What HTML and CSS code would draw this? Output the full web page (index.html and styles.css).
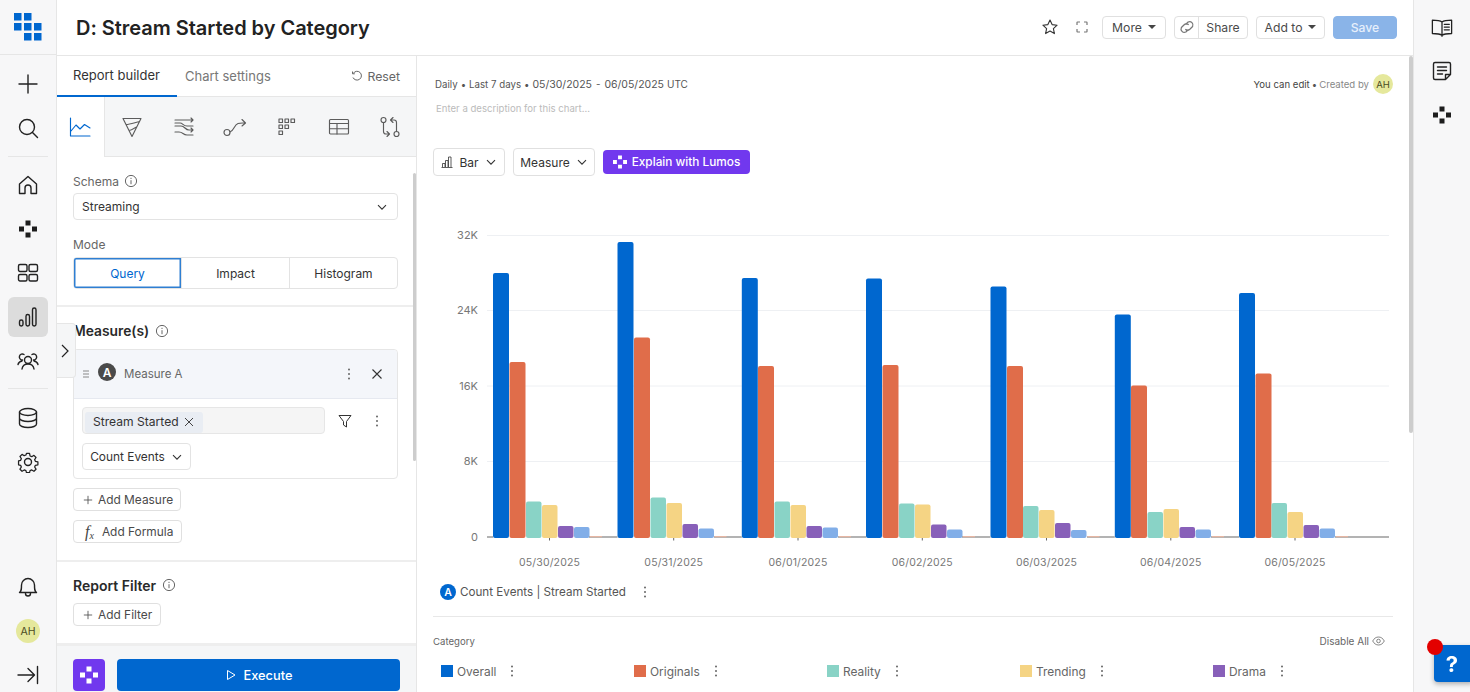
FILE: index.html
```html
<!DOCTYPE html>
<html lang="en">
<head>
<meta charset="utf-8">
<title>D: Stream Started by Category</title>
<link rel="stylesheet" href="styles.css">
</head>
<body>
<svg class="defs" width="0" height="0" aria-hidden="true">
  <symbol id="lumos" viewBox="0 0 18 18"><path d="M6.5 0.5h5v5h-5zM0 6.5h5v5H0zM13 6.5h5v5h-5zM6.5 12.5h5v5h-5z"/></symbol>
  <symbol id="info" viewBox="0 0 14 14"><circle cx="7" cy="7" r="5.6" fill="none" stroke="currentColor"/><path d="M7 6.2v4M7 3.8v1.2" stroke="currentColor" fill="none"/></symbol>
  <symbol id="chev" viewBox="0 0 12 12"><path d="M2 4.2l4 4 4-4" fill="none" stroke="currentColor" stroke-width="1.1"/></symbol>
  <symbol id="dots" viewBox="0 0 4 14"><circle cx="2" cy="2.5" r="1" fill="currentColor"/><circle cx="2" cy="7" r="1" fill="currentColor"/><circle cx="2" cy="11.5" r="1" fill="currentColor"/></symbol>
  <symbol id="plus" viewBox="0 0 12 12"><path d="M6 1v10M1 6h10" fill="none" stroke="currentColor"/></symbol>
</svg>
<div class="app">
  <nav class="rail">
    <div class="logo-cell">
      <svg width="28" height="28" viewBox="14 13 28 28"><path class="logo" d="M14 13h7.500v7.500H14zM24 13h7.500v7.500H24zM14 23h7.500v7.500H14zM24 23h7.500v7.500H24zM34 23h7.500v7.500H34zM24 33h7.500v7.500H24zM34 33h7.500v7.500H34z"/></svg>
    </div>
    <div class="rail-top">
      <a class="rail-item"><svg class="ico" viewBox="0 0 22 22"><path d="M11 2v18M2 11h18"/></svg></a>
      <a class="rail-item"><svg class="ico" viewBox="0 0 22 22"><circle cx="10" cy="10" r="7.500"/><path d="M15.500 15.500l5 5"/></svg></a>
    </div>
    <div class="rail-div first"></div>
    <a class="rail-item"><svg class="ico" viewBox="0 0 22 22"><path d="M2.500 10L11 2.500 19.500 10v9.500h-5.500v-5.500a3 3 0 0 0-6 0v5.500H2.500z"/></svg></a>
    <a class="rail-item"><svg class="lumos-ico" width="18" height="18"><use href="#lumos"/></svg></a>
    <a class="rail-item"><svg class="ico" viewBox="0 0 22 22"><rect x="1.500" y="2.500" width="8.500" height="7" rx="1.500"/><rect x="12" y="2.500" width="8.500" height="7" rx="1.500"/><rect x="1.500" y="12.500" width="8.500" height="6.500" rx="1.500"/><rect x="12" y="12.500" width="8.500" height="6.500" rx="1.500"/></svg></a>
    <a class="rail-item active"><span class="active-bg"><svg class="ico" viewBox="0 0 22 22"><rect x="2.500" y="14" width="3.500" height="6" rx="1.700"/><rect x="9" y="8.500" width="3.500" height="11.500" rx="1.700"/><rect x="15.500" y="2" width="3.500" height="18" rx="1.700"/></svg></span></a>
    <a class="rail-item"><svg class="ico" viewBox="0 0 22 22"><circle cx="11" cy="10" r="3.500"/><path d="M5 19c.5-3.500 3-5 6-5s5.500 1.500 6 5"/><path d="M5.500 10a3 3 0 1 1 1.500-5.500M16.500 10A3 3 0 1 0 15 4.500M1 14.500c.5-2 2-3 4-3.500M21 14.500c-.5-2-2-3-4-3.500"/></svg></a>
    <div class="rail-div second"></div>
    <a class="rail-item"><svg class="ico" viewBox="0 0 22 22"><ellipse cx="11" cy="5" rx="8.500" ry="3.500"/><path d="M2.500 5v12c0 2 3.800 3.500 8.500 3.500s8.500-1.500 8.500-3.500V5M2.500 11c0 2 3.800 3.500 8.500 3.500s8.500-1.500 8.500-3.500"/></svg></a>
    <a class="rail-item"><svg class="ico" viewBox="0 0 22 22"><circle cx="11" cy="11" r="3.500"/><path d="M9.300 1.500h3.400l.6 2.800 1.900.8 2.400-1.500 2.300 2.400-1.500 2.400.8 1.800 2.800.6v3.300l-2.800.6-.8 1.900 1.500 2.400-2.300 2.300-2.400-1.500-1.900.8-.6 2.300H9.300l-.6-2.300-1.900-.8-2.400 1.500-2.300-2.300 1.500-2.400-.8-1.900-2.300-.6V9.700l2.300-.6.8-1.800-1.500-2.400 2.300-2.400 2.400 1.500 1.900-.8z" transform="translate(1.100 1.100) scale(.9)"/></svg></a>
    <div class="rail-bottom">
      <a class="rail-item"><svg class="ico bell" viewBox="0 0 22 22"><path d="M2.500 17.500c2-1.500 2-3 2-7.500a6.500 6.500 0 0 1 13 0c0 4.500 0 6 2 7.500zM8.500 18.500a2.500 2.500 0 0 0 5 0"/></svg></a>
      <a class="rail-item"><span class="avatar big">AH</span></a>
      <a class="rail-item"><svg class="ico" viewBox="0 0 22 22"><path d="M1 11h16M11 4.500l6.500 6.500-6.500 6.500M20.500 2.500v17"/></svg></a>
    </div>
  </nav>

  <header class="topbar">
    <h1 class="title">D: Stream Started by Category</h1>
    <div class="actions">
      <svg class="act-ico" width="18" height="18" viewBox="0 0 18 18"><path d="M9 2l2.100 4.600 5 .6-3.700 3.400 1 5L9 13.100l-4.400 2.500 1-5L1.900 7.200l5-.6z"/></svg>
      <svg class="act-ico expand" width="14" height="14" viewBox="0 0 14 14"><path d="M2 5V2.500a.5.500 0 0 1 .5-.5H5M9 2h2.500a.5.500 0 0 1 .5.500V5M12 9v2.500a.5.500 0 0 1-.5.500H9M5 12H2.500a.5.500 0 0 1-.5-.5V9"/></svg>
      <button class="btn more">More <i class="caret"></i></button>
      <div class="btn share">
        <span class="link-part"><svg width="18" height="18" viewBox="0 0 16 16" class="act-ico light"><path d="M7 5.500l2-2a3 3 0 0 1 4 4l-2.500 2.500a3 3 0 0 1-4 0M9 10.500l-2 2a3 3 0 0 1-4-4l2.500-2.500a3 3 0 0 1 4 0"/></svg></span>
        <span class="share-part">Share</span>
      </div>
      <button class="btn addto">Add to <i class="caret"></i></button>
      <button class="btn save">Save</button>
    </div>
  </header>

  <aside class="panel">
    <div class="tabs">
      <div class="tab on">Report builder</div>
      <div class="tab">Chart settings</div>
      <div class="reset"><svg width="12" height="12" viewBox="0 0 12 12"><path d="M2.200 3.500A4.400 4.400 0 1 1 2 7.500M1.500 1.500v2.300h2.300" fill="none" stroke="currentColor"/></svg>Reset</div>
    </div>
    <div class="types">
      <div class="type on"><svg class="tico blue" viewBox="0 0 22 22"><path d="M1.500 2v18h19.500M2 15l5-6 4 4 4.500-4.500L21 12"/></svg></div>
      <div class="type second"><svg class="tico" viewBox="0 0 22 22"><path d="M2 2.500h18L11 20.500zM5 8.500c4 0 9-2 13.500-3M8 14.500c2 0 5-2 7.500-3.500"/></svg></div>
      <div class="type"><svg class="tico" viewBox="0 0 22 22"><path d="M2 4h11c3 0 3 0 7 0M18 2l2 2-2 2M2 10h6c4 0 4 4 8 4h4M18 12l2 2-2 2M2 16h4c4 0 4 3 8 3h6M2 7h5c3 0 3 3 7 3h6"/></svg></div>
      <div class="type"><svg class="tico wide" viewBox="0 0 24 22"><circle cx="3.500" cy="16.500" r="3"/><path d="M6.500 16c4-1 4-7 8-8.500 2-.7 4-.5 7-.5M18.500 3.500L22 7l-3.500 3"/></svg></div>
      <div class="type"><svg class="tico sm" viewBox="0 0 18 18"><path d="M1 1h3.500v3.500H1zM7 1h3.500v3.500H7zM13 1h3.500v3.500H13zM1 7h3.500v3.500H1zM7 7h3.500v3.500H7zM1 13h3.500v3.500H1z"/></svg></div>
      <div class="type"><svg class="tico" viewBox="0 0 22 22"><rect x="1.500" y="3.500" width="19" height="14.500" rx="1"/><path d="M1.500 7.500h19M1.500 12.700h19M9 7.500V18"/></svg></div>
      <div class="type"><svg class="tico" viewBox="0 0 22 22"><circle cx="4.500" cy="4" r="2.500"/><circle cx="17.500" cy="18" r="2.500"/><path d="M4.500 6.500v9c0 1.500 1 2.500 2.500 2.500h3M8 15.500l2.500 2.500L8 20.500M17.500 15.500v-9C17.500 5 16.500 4 15 4h-3M14 1.500L11.500 4 14 6.500"/></svg></div>
    </div>
    <div class="body">
      <div class="sect">
        <label class="lbl first">Schema <svg class="info" width="14" height="14"><use href="#info"/></svg></label>
        <div class="select"><span>Streaming</span><svg width="12" height="12"><use href="#chev"/></svg></div>
        <label class="lbl mode">Mode</label>
        <div class="seg">
          <div class="seg-i on">Query</div>
          <div class="seg-i">Impact</div>
          <div class="seg-i">Histogram</div>
        </div>
      </div>
      <div class="divider"></div>
      <div class="sect">
        <h3 class="head m-head">Measure(s) <svg class="info" width="14" height="14"><use href="#info"/></svg></h3>
        <div class="card">
          <div class="card-h">
            <svg class="grip" width="8" height="8" viewBox="0 0 8 8"><path d="M1 1h6M1 4h6M1 7h6"/></svg>
            <span class="badge dark">A</span>
            <span class="m-name">Measure A</span>
            <svg class="kebab" width="4" height="14"><use href="#dots"/></svg>
            <svg class="close" width="12" height="12" viewBox="0 0 12 12"><path d="M1.500 1.500l9 9M10.500 1.500l-9 9"/></svg>
          </div>
          <div class="card-b">
            <div class="event-row">
              <div class="event-input"><span class="chip">Stream Started <svg width="10" height="10" viewBox="0 0 10 10"><path d="M1 1l8 8M9 1l-8 8" stroke="currentColor" fill="none"/></svg></span></div>
              <svg class="filter" width="14" height="14" viewBox="0 0 14 14"><path d="M1 1.500h12L8.500 7.500v5.500l-3-2V7.500z"/></svg>
              <svg class="kebab k2" width="4" height="14"><use href="#dots"/></svg>
            </div>
            <div class="count">Count Events <svg width="12" height="12"><use href="#chev"/></svg></div>
          </div>
        </div>
        <button class="btn add mt9"><svg width="10" height="10"><use href="#plus"/></svg>Add Measure</button>
        <button class="btn add formula"><em class="fx">f<sub>x</sub></em>Add Formula</button>
      </div>
      <div class="divider d2"></div>
      <div class="sect">
        <h3 class="head f-head">Report Filter <svg class="info" width="14" height="14"><use href="#info"/></svg></h3>
        <button class="btn add filter-add"><svg width="10" height="10"><use href="#plus"/></svg>Add Filter</button>
      </div>
    </div>
    <div class="foot">
      <button class="lumos-btn"><svg width="18" height="18"><use href="#lumos"/></svg></button>
      <button class="exec"><svg width="12" height="12" viewBox="0 0 12 12"><path d="M2.500 1.500l7.500 4.500-7.500 4.500z" fill="none" stroke="currentColor"/></svg>Execute</button>
    </div>
    <div class="p-scroll"></div>
    <div class="collapse-tab"><svg width="10" height="14" viewBox="0 0 10 14"><path d="M2 1l6 6-6 6" fill="none" stroke="#222" stroke-width="1.200"/></svg></div>
  </aside>

  <main class="main">
    <div class="meta">
      <div class="meta-l"><span>Daily</span><span>•</span><span>Last 7 days</span><span>•</span><span class="date">05/30/2025</span><span class="dash">-</span><span class="date">06/05/2025</span><span>UTC</span></div>
      <div class="meta-r"><b>You can edit</b><i>•</i><span>Created by</span><span class="avatar">AH</span></div>
    </div>
    <div class="desc">Enter a description for this chart...</div>
    <div class="controls">
      <button class="btn ctl bar"><svg width="12" height="12" viewBox="0 0 12 12"><path d="M.5 11.500h11M1.500 11V7.500h2.500V11M4.500 11V4.500h2.500V11M7.500 11V1h2.500v10" fill="none" stroke="#333" stroke-width=".8"/></svg>Bar<svg width="12" height="12"><use href="#chev"/></svg></button>
      <button class="btn ctl measure">Measure<svg width="12" height="12"><use href="#chev"/></svg></button>
      <button class="explain"><svg width="14" height="14"><use href="#lumos"/></svg>Explain with Lumos</button>
    </div>
    <svg class="chart" width="960" height="404" viewBox="433 176 960 404">
      <g class="grid"><path d="M487 235.500H1389M487 310.500H1389M487 386H1389M487 461.500H1389"/></g>
      <g class="ylab">
        <text x="478" y="239">32K</text><text x="478" y="314">24K</text><text x="478" y="390">16K</text><text x="478" y="465">8K</text><text x="478" y="541">0</text>
      </g>
      <g class="s1">
        <rect x="493" y="273" width="16" height="265" rx="2"/><rect x="617.500" y="242" width="16" height="296" rx="2"/><rect x="741.800" y="278" width="16" height="260" rx="2"/><rect x="866" y="278.500" width="16" height="259.500" rx="2"/><rect x="990.500" y="286.500" width="16" height="251.500" rx="2"/><rect x="1114.800" y="314.500" width="16" height="223.500" rx="2"/><rect x="1239" y="293" width="16" height="245" rx="2"/>
      </g>
      <g class="s2">
        <rect x="509.500" y="362" width="16" height="176" rx="2"/><rect x="634" y="337.500" width="16" height="200.500" rx="2"/><rect x="758" y="366" width="16" height="172" rx="2"/><rect x="882.500" y="365" width="16" height="173" rx="2"/><rect x="1007" y="366" width="16" height="172" rx="2"/><rect x="1131" y="385.500" width="16" height="152.500" rx="2"/><rect x="1255.500" y="373.500" width="16" height="164.500" rx="2"/>
      </g>
      <g class="s3">
        <rect x="526" y="501.500" width="15.500" height="36.500" rx="2"/><rect x="650.500" y="497.500" width="15.500" height="40.500" rx="2"/><rect x="774.500" y="501.500" width="15.500" height="36.500" rx="2"/><rect x="899" y="503.500" width="15.500" height="34.500" rx="2"/><rect x="1023" y="506" width="15.500" height="32" rx="2"/><rect x="1147.500" y="512" width="15.500" height="26" rx="2"/><rect x="1271.500" y="503" width="15.500" height="35" rx="2"/>
      </g>
      <g class="s4">
        <rect x="542" y="505" width="15.500" height="33" rx="2"/><rect x="666.500" y="503" width="15.500" height="35" rx="2"/><rect x="790.500" y="505" width="15.500" height="33" rx="2"/><rect x="915" y="504.500" width="15.500" height="33.500" rx="2"/><rect x="1039" y="510" width="15.500" height="28" rx="2"/><rect x="1163.500" y="509" width="15.500" height="29" rx="2"/><rect x="1287.500" y="512" width="15.500" height="26" rx="2"/>
      </g>
      <g class="s5">
        <rect x="558" y="526" width="15.500" height="12" rx="2"/><rect x="682.500" y="524" width="15.500" height="14" rx="2"/><rect x="806.500" y="526" width="15.500" height="12" rx="2"/><rect x="931" y="524.500" width="15.500" height="13.500" rx="2"/><rect x="1055" y="523" width="15.500" height="15" rx="2"/><rect x="1179.500" y="527" width="15.500" height="11" rx="2"/><rect x="1303.500" y="525" width="15.500" height="13" rx="2"/>
      </g>
      <g class="s6">
        <rect x="574" y="527" width="15.500" height="11" rx="2"/><rect x="698.500" y="528.500" width="15.500" height="9.500" rx="2"/><rect x="822.500" y="527.500" width="15.500" height="10.500" rx="2"/><rect x="947" y="529.500" width="15.500" height="8.500" rx="2"/><rect x="1071" y="530" width="15.500" height="8" rx="2"/><rect x="1195.500" y="529.500" width="15.500" height="8.500" rx="2"/><rect x="1319.500" y="528.500" width="15.500" height="9.500" rx="2"/>
      </g>
      <path class="axis" d="M487 537H493M589 537H617.500M714 537H741.800M838 537H866M962 537H990.500M1087 537H1114.800M1211 537H1239M1335 537H1389"/>
      <path class="s7" d="M590 536.700h12M714.500 536.700h12M839 536.700h12M963 536.700h12M1087.500 536.700h12M1212 536.700h12M1336 536.700h12"/>
      <path class="tick" d="M549.500 538v2.500M673.700 538v2.500M798 538v2.500M922.300 538v2.500M1046.500 538v2.500M1170.800 538v2.500M1295 538v2.500"/>
      <g class="xlab">
        <text x="549.500" y="566">05/30/2025</text><text x="673.700" y="566">05/31/2025</text><text x="798" y="566">06/01/2025</text><text x="922.300" y="566">06/02/2025</text><text x="1046.500" y="566">06/03/2025</text><text x="1170.800" y="566">06/04/2025</text><text x="1295" y="566">06/05/2025</text>
      </g>
    </svg>
    <div class="series">
      <span class="badge blue">A</span>
      <span class="series-name">Count Events | Stream Started</span>
      <svg class="kebab" width="4" height="14"><use href="#dots"/></svg>
    </div>
    <div class="hr"></div>
    <div class="cat-row">
      <span>Category</span>
      <span class="disable">Disable All <svg width="13" height="10" viewBox="0 0 13 10"><path d="M.7 5C2 2.500 4 1 6.500 1s4.500 1.500 5.800 4C11 7.500 9 9 6.500 9S2 7.500.7 5z" fill="none" stroke="currentColor" stroke-width=".8"/><circle cx="6.500" cy="5" r="1.800" fill="none" stroke="currentColor" stroke-width=".8"/></svg></span>
    </div>
    <div class="legend">
      <div class="leg"><i class="sw c1"></i><span>Overall</span><svg class="kebab" width="4" height="14"><use href="#dots"/></svg></div>
      <div class="leg"><i class="sw c2"></i><span>Originals</span><svg class="kebab" width="4" height="14"><use href="#dots"/></svg></div>
      <div class="leg"><i class="sw c3"></i><span>Reality</span><svg class="kebab" width="4" height="14"><use href="#dots"/></svg></div>
      <div class="leg"><i class="sw c4"></i><span>Trending</span><svg class="kebab" width="4" height="14"><use href="#dots"/></svg></div>
      <div class="leg"><i class="sw c5"></i><span>Drama</span><svg class="kebab" width="4" height="14"><use href="#dots"/></svg></div>
    </div>
    <div class="m-scroll"></div>
  </main>

  <aside class="rail-r">
    <a class="r-item"><svg class="ico" viewBox="0 0 24 22"><path d="M12 4.500C10 3 6 2.500 1.500 2.500v14.500c4.500 0 8.500.5 10.500 2 2-1.500 6-2 10.500-2V2.500C18 2.500 14 3 12 4.500zM12 4.500V20M14.500 7h5.500M14.500 10h5.500M14.500 13h5.500"/></svg></a>
    <a class="r-item"><svg class="ico" viewBox="0 0 22 22"><path d="M4 2.500h14a1.500 1.500 0 0 1 1.500 1.500v10.500l-5 5H4A1.500 1.500 0 0 1 2.500 18V4A1.500 1.500 0 0 1 4 2.500zM6.500 7h9M6.500 10.500h9M6.500 14h5M14.500 19.500v-5h5"/></svg></a>
    <a class="r-item"><svg class="lumos-ico" width="18" height="18"><use href="#lumos"/></svg></a>
  </aside>
</div>
<div class="help">?<i class="help-dot"></i></div>
</body>
</html>
```
FILE: styles.css
```css
* { box-sizing: border-box; }
html, body { margin: 0; height: 100%; overflow: hidden; }
body { font-family: Inter, "Liberation Sans", sans-serif; color: #333; background: #fff; }
.defs { position: absolute; }
button { font-family: inherit; }

.app {
  display: grid;
  grid-template-columns: 57px 360px 1fr 57px;
  grid-template-rows: 56px 1fr;
  height: 692px;
  width: 1470px;
}

/* left rail */
.rail {
  grid-row: 1 / 3;
  background: #f7f7f8;
  border-right: 1px solid #e6e6e6;
  display: flex;
  flex-direction: column;
  align-items: center;
}
.logo-cell { height: 55px; width: 100%; display: flex; align-items: center; justify-content: center; border-bottom: 1px solid #e6e6e6; padding-bottom: 1px; }
.logo { fill: #0067cf; }
.rail-top { padding-top: 7px; }
.rail-item { display: flex; width: 56px; height: 44px; align-items: center; justify-content: center; flex: none; }
.rail-div { width: 40px; height: 1px; background: #e6e6e6; margin: 6px 0; flex: none; }
.rail-div.second { margin: 5px 0 7px; }
.ico { width: 22px; height: 22px; fill: none; stroke: #222; stroke-width: 1.4; stroke-linejoin: round; stroke-linecap: round; }
.ico.bell { margin-bottom: 2px; }
.lumos-ico { fill: #1d1d1d; }
.active-bg { width: 40px; height: 40px; border-radius: 6px; background: #dcdcdc; display: flex; align-items: center; justify-content: center; }
.rail-bottom { margin-top: auto; margin-bottom: -5px; }
.avatar { width: 20px; height: 20px; border-radius: 50%; background: #e5e89c; color: #4a4a1f; font-size: 9.500px; display: inline-flex; align-items: center; justify-content: center; margin-left: 2px; }
.avatar.big { width: 24px; height: 24px; font-size: 10.500px; margin: 0; }

/* top bar */
.topbar {
  grid-column: 2 / 4;
  border-bottom: 1px solid #e6e6e6;
  display: flex;
  align-items: center;
  justify-content: space-between;
  padding: 0 16px 0 19px;
}
.title { margin: 0; font-size: 20px; font-weight: 600; color: #222; line-height: 1; letter-spacing: -.03px; }
.actions { display: flex; align-items: center; margin-bottom: 1px; }
.act-ico { fill: none; stroke: #333; stroke-width: 1.100; stroke-linejoin: round; margin-right: 16px; }
.act-ico.expand { stroke: #777; stroke-width: 1.200; margin-right: 13px; }
.act-ico.light { stroke: #777; margin: 0; }
.btn { height: 23px; border: 1px solid #e0e0e0; border-radius: 4px; background: #fff; font-size: 12.200px; color: #4a4a4a; display: inline-flex; align-items: center; justify-content: center; padding: 0; }
.more { width: 64px; margin-right: 8px; }
.share { width: 74px; margin-right: 8px; }
.link-part { width: 24px; height: 100%; display: flex; align-items: center; justify-content: center; border-right: 1px solid #e0e0e0; }
.share-part { flex: 1; text-align: center; }
.addto { width: 69px; margin-right: 8px; }
.save { width: 64px; background: #8ab4e8; border-color: #8ab4e8; color: #e6effb; font-weight: 500; }
.caret { width: 0; height: 0; border: 4.500px solid transparent; border-top-color: #444; border-bottom: 0; margin-left: 6px; }

/* panel */
.panel {
  grid-row: 2;
  grid-column: 2;
  border-right: 1px solid #e6e6e6;
  display: flex;
  flex-direction: column;
  position: relative;
  overflow: visible;
  min-height: 0;
}
.tabs { height: 41px; flex: none; display: flex; align-items: stretch; border-bottom: 1px solid #e6e6e6; position: relative; }
.tab { font-size: 13px; color: #777; display: flex; align-items: center; padding: 0 16px 1px; margin-bottom: -1px; white-space: nowrap; }
.tab.on { color: #333; border-bottom: 2px solid #0067cf; width: 120px; }
.tab + .tab { padding-left: 8px; }
.reset { margin-left: auto; padding-right: 16px; font-size: 12.300px; color: #666; display: flex; align-items: center; gap: 4px; }
.types { height: 60px; flex: none; display: flex; background: #f5f6f7; border-bottom: 1px solid #e6e6e6; }
.type { width: 52px; display: flex; align-items: center; justify-content: center; }
.type.on { width: 48px; background: #fff; border-right: 1px solid #e6e6e6; margin-bottom: -1px; }
.type.second { width: 54px; padding-left: 2px; }
.tico { width: 22px; height: 22px; fill: none; stroke: #5c5c5c; stroke-width: 1.150; stroke-linejoin: round; stroke-linecap: round; }
.tico.wide { width: 25px; }
.tico.sm { width: 18px; height: 18px; }
.tico.blue { stroke: #0067cf; }

.body { flex: 1; min-height: 0; overflow: hidden; }
.sect { padding: 0 18px 0 16px; }
.lbl { display: flex; align-items: center; gap: 5px; font-size: 12px; color: #666; height: 16px; margin-bottom: 4px; }
.lbl.first { margin-top: 16px; }
.lbl.mode { margin-top: 16px; margin-bottom: 5px; }
.info { color: #666; }
.select { height: 27px; border: 1px solid #e3e3e3; border-radius: 4px; display: flex; align-items: center; justify-content: space-between; padding: 0 9px 0 8px; font-size: 12px; color: #333; }
.seg { height: 32px; display: flex; border: 1px solid #e3e3e3; border-radius: 4px; font-size: 12px; color: #333; }
.seg-i { flex: 1; display: flex; align-items: center; justify-content: center; border-left: 1px solid #e3e3e3; }
.seg-i:first-child { border-left: 0; }
.seg-i.on { color: #0067cf; box-shadow: inset 0 0 0 1.500px #2f7fd2; border-radius: 2px 0 0 2px; background: #fff; }
.divider { height: 2px; background: #eeeeee; margin-top: 16px; }
.divider.d2 { margin-top: 17px; }
.head { margin: 0; display: flex; align-items: center; gap: 6px; font-size: 14px; font-weight: 600; color: #2a2a2a; height: 20px; }
.m-head { margin-top: 14px; margin-bottom: 8px; font-size: 13.800px; }
.f-head { margin-top: 13px; margin-bottom: 8px; }
.card { height: 130px; border: 1px solid #e6e6e6; border-radius: 4px; }
.card-h { height: 49px; background: #f4f6fa; border-bottom: 1px solid #e6e9f0; display: flex; align-items: center; padding: 0 14px 0 8px; border-radius: 4px 4px 0 0; }
.grip { fill: none; stroke: #888; margin-right: 8px; }
.badge { width: 18px; height: 18px; border-radius: 50%; color: #fff; font-size: 12px; font-weight: 600; display: inline-flex; align-items: center; justify-content: center; flex: none; }
.badge.dark { background: #4a4a4a; margin-top: -4px; }
.badge.blue { background: #0067cf; width: 16px; height: 16px; font-size: 10.500px; }
.m-name { font-size: 11.500px; color: #666; margin-left: 8px; flex: 1; }
.kebab { color: #666; flex: none; }
.close { fill: none; stroke: #333; stroke-width: 1.100; margin-left: 20px; }
.card-b { padding: 8px; }
.event-row { display: flex; align-items: center; }
.event-input { width: 243px; height: 27px; background: #f5f5f5; border: 1px solid #e6e6e6; border-radius: 4px; padding: 2px; }
.chip { height: 21px; display: inline-flex; align-items: center; gap: 5px; background: #e9edf3; border-radius: 3px; padding: 0 3px 1px 8px; font-size: 12.100px; color: #333; }
.chip svg { color: #444; margin: 1px 6px 0 0; }
.filter { fill: none; stroke: #333; stroke-width: 1; stroke-linejoin: round; margin-left: 13px; }
.k2 { margin-left: 23px; }
.count { width: 109px; height: 27px; margin-top: 9px; border: 1px solid #e3e3e3; border-radius: 4px; display: flex; align-items: center; justify-content: center; gap: 6px; font-size: 11.900px; color: #333; }
.add { display: flex; gap: 5px; font-size: 11.900px; justify-content: flex-start; padding-left: 9px; }
.mt9 { margin-top: 9px; width: 108px; }
.formula { margin-top: 9px; width: 109px; padding-left: 11px; gap: 8px; }
.filter-add { width: 88px; }
.fx { font-family: "Liberation Serif", serif; font-size: 16px; color: #444; line-height: 1; }
.fx sub { font-size: 10px; vertical-align: -2px; line-height: 0; }
.foot { height: 49px; flex: none; border-top: 3px solid #eeeeee; background: #f5f6f7; display: flex; padding: 13px 16px 0; gap: 12px; }
.lumos-btn { width: 32px; height: 32px; background: #7138ee; border: 0; border-radius: 4px; display: flex; align-items: center; justify-content: center; padding: 0; fill: #fff; }
.exec { width: 283px; height: 32px; background: #0067cf; border: 0; border-radius: 4px; color: #fff; font-size: 12.800px; font-weight: 500; display: flex; align-items: center; justify-content: center; gap: 7px; padding: 0; }
.p-scroll { position: absolute; right: 0; top: 117px; width: 3px; height: 288px; background: #cdcdcd; border-radius: 2px; }
.collapse-tab { position: absolute; left: 0; top: 267px; width: 19px; height: 55px; padding-right: 2px; background: #f5f6f7; border: 1px solid #e6e6e6; border-left: 0; border-radius: 0 4px 4px 0; display: flex; align-items: center; justify-content: center; }

/* main */
.main { grid-row: 2; grid-column: 3; padding: 0 20px 0 16px; position: relative; overflow: hidden; min-width: 0; }
.meta { height: 20px; margin-top: 18px; display: flex; align-items: center; justify-content: space-between; font-size: 9.700px; color: #555; }
.meta-l { margin-left: 2px; display: flex; align-items: center; gap: 3px; }
.meta-l .date { font-size: 10.500px; }
.meta-l .dash { margin: 0 1px; }
.meta-l span:last-child { font-size: 10px; }
.meta-r { color: #555; display: flex; align-items: center; gap: 2px; font-size: 9.600px; }
.meta-r b { font-weight: 400; color: #444; }
.meta-r i { font-style: normal; color: #555; }
.meta-r span { color: #888; }
.meta-r .avatar { color: #4a4a1f; }
.desc { height: 16px; margin: 7px 0 0 3px; font-size: 9.600px; line-height: 16px; color: #bbb; }
.controls { display: flex; align-items: center; gap: 8px; margin-top: 31px; height: 28px; }
.ctl { height: 28px; color: #333; font-size: 12px; gap: 6px; }
.bar { width: 72px; }
.measure { width: 82px; }
.explain { width: 147px; height: 24px; background: #7138ee; color: #fff; border: 0; border-radius: 4px; font-size: 11.800px; font-weight: 500; display: flex; align-items: center; justify-content: center; gap: 5px; fill: #fff; padding: 0; }
.chart { display: block; }
.grid path { stroke: #eef0f3; fill: none; }
.ylab text { font-size: 11px; fill: #777; text-anchor: end; }
.xlab text { font-size: 10.500px; fill: #777; text-anchor: middle; letter-spacing: .15px; }
.s1 { fill: #0067cf; }
.s2 { fill: #e06d4a; }
.s3 { fill: #89d3c6; }
.s4 { fill: #f5d484; }
.s5 { fill: #8860b9; }
.s6 { fill: #81aee8; }
.s7 { stroke: #f2b79f; fill: none; }
.axis { stroke: #9a9a9a; stroke-width: 1.500; fill: none; }
.tick { stroke: #666; fill: none; }
.series { height: 24px; display: flex; align-items: center; margin-left: 7px; font-size: 11.650px; color: #555; }
.series-name { margin-left: 4px; width: 183px; }
.hr { height: 1px; background: #e8e8e8; margin-top: 12px; }
.cat-row { height: 16px; margin-top: 16px; display: flex; align-items: center; justify-content: space-between; font-size: 9.600px; color: #666; padding-right: 8px; }
.disable { display: flex; align-items: center; gap: 3px; font-size: 10px; }
.legend { display: flex; margin-top: 12px; padding-left: 8px; height: 20px; }
.leg { width: 193px; flex: none; display: flex; align-items: center; font-size: 11.900px; color: #666; }
.leg span { margin-left: 4px; }
.leg .kebab { margin-left: 14px; }
.sw { width: 12px; height: 12px; flex: none; }
.c1 { background: #0067cf; }
.c2 { background: #e06d4a; }
.c3 { background: #89d3c6; }
.c4 { background: #f5d484; }
.c5 { background: #8860b9; }
.m-scroll { position: absolute; right: 0; top: 0; width: 4px; height: 377px; background: #cdcdcd; border-radius: 2px; }

/* right rail */
.rail-r { grid-row: 1 / 3; grid-column: 4; background: #f7f7f8; border-left: 1px solid #e6e6e6; display: flex; flex-direction: column; align-items: center; padding-top: 6px; }
.r-item { height: 43.500px; display: flex; align-items: center; justify-content: center; }
.help { position: fixed; left: 1434px; top: 645px; width: 40px; height: 37px; background: #0067cf; border-radius: 4px; color: #fff; font-size: 22px; font-weight: 700; display: flex; align-items: center; justify-content: center; padding-right: 4px; box-shadow: 0 2px 5px rgba(0,0,0,.3); }
.help-dot { position: absolute; left: -7px; top: -6px; width: 16px; height: 16px; border-radius: 50%; background: #e30000; }
```
